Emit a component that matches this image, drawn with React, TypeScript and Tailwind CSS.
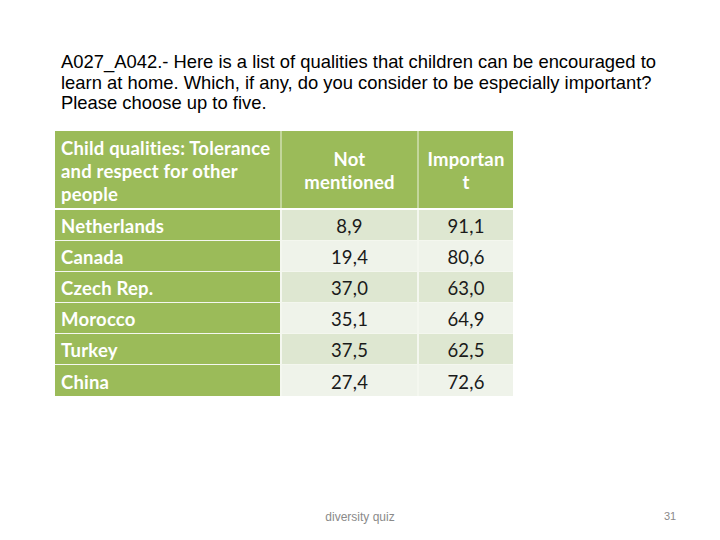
const rows = [
  { country: 'Netherlands', notMentioned: '8,9', important: '91,1' },
  { country: 'Canada', notMentioned: '19,4', important: '80,6' },
  { country: 'Czech Rep.', notMentioned: '37,0', important: '63,0' },
  { country: 'Morocco', notMentioned: '35,1', important: '64,9' },
  { country: 'Turkey', notMentioned: '37,5', important: '62,5' },
  { country: 'China', notMentioned: '27,4', important: '72,6' },
]

export default function App() {
  return (
    <div className="relative w-[720px] h-[540px] bg-white overflow-hidden">
      <div className="pt-[52px] pl-[61px] pr-[30px]">
        <p className="font-['Liberation_Sans',Arial,sans-serif] text-[18.4px] leading-[20.5px] text-black">
          A027_A042.- Here is a list of qualities that children can be encouraged to learn at home. Which, if any, do you consider to be especially important? Please choose up to five.
        </p>
      </div>

      {/* Table */}
      <div className="ml-[55px] mt-[17px] w-[458px] font-['Lato','Open_Sans',sans-serif] text-[18.5px] tracking-[0.2px] [font-variant-ligatures:none]">
        <div className="flex h-[77px] bg-[#9bbb59] text-white font-bold leading-[23px]">
          <div className="w-[227px] px-[6px] pt-[4px] flex items-center border-r-2 border-[#c3d69b]">
            <span>Child qualities: Tolerance and respect for other people</span>
          </div>
          <div className="w-[137px] pt-[4px] flex items-center justify-center text-center border-r-2 border-[#c3d69b]">
            <span>Not<br />mentioned</span>
          </div>
          <div className="flex-1 pt-[4px] flex items-center justify-center text-center">
            <span>Importan<br />t</span>
          </div>
        </div>
        <div className="h-[2px] bg-white" />
        {rows.map((r, i) => (
          <div
            key={r.country}
            className={`flex h-[31px] ${i < rows.length - 1 ? 'border-b border-[#f4f7ef]' : ''} ${i % 2 === 0 ? 'bg-[#dee7d1]' : 'bg-[#eff3ea]'}`}
          >
            <div className="w-[227px] px-[6px] pt-[5px] flex items-center bg-[#9bbb59] text-white font-bold border-r-2 border-[#f4f7ef]">
              {r.country}
            </div>
            <div className="w-[137px] pt-[5px] flex items-center justify-center text-[#1a1a1a] border-r-2 border-[#f4f7ef]">
              {r.notMentioned}
            </div>
            <div className="flex-1 pt-[5px] flex items-center justify-center text-[#1a1a1a]">
              {r.important}
            </div>
          </div>
        ))}
      </div>

      {/* Footer */}
      <div className="absolute left-0 right-0 top-[508px] flex justify-center font-['Liberation_Sans',Arial,sans-serif] text-[12px] text-[#8a8a8a]">
        diversity quiz
      </div>
      <div className="absolute left-[664px] top-[508px] font-['Liberation_Sans',Arial,sans-serif] text-[11px] text-[#8a8a8a]">
        31
      </div>
    </div>
  )
}
